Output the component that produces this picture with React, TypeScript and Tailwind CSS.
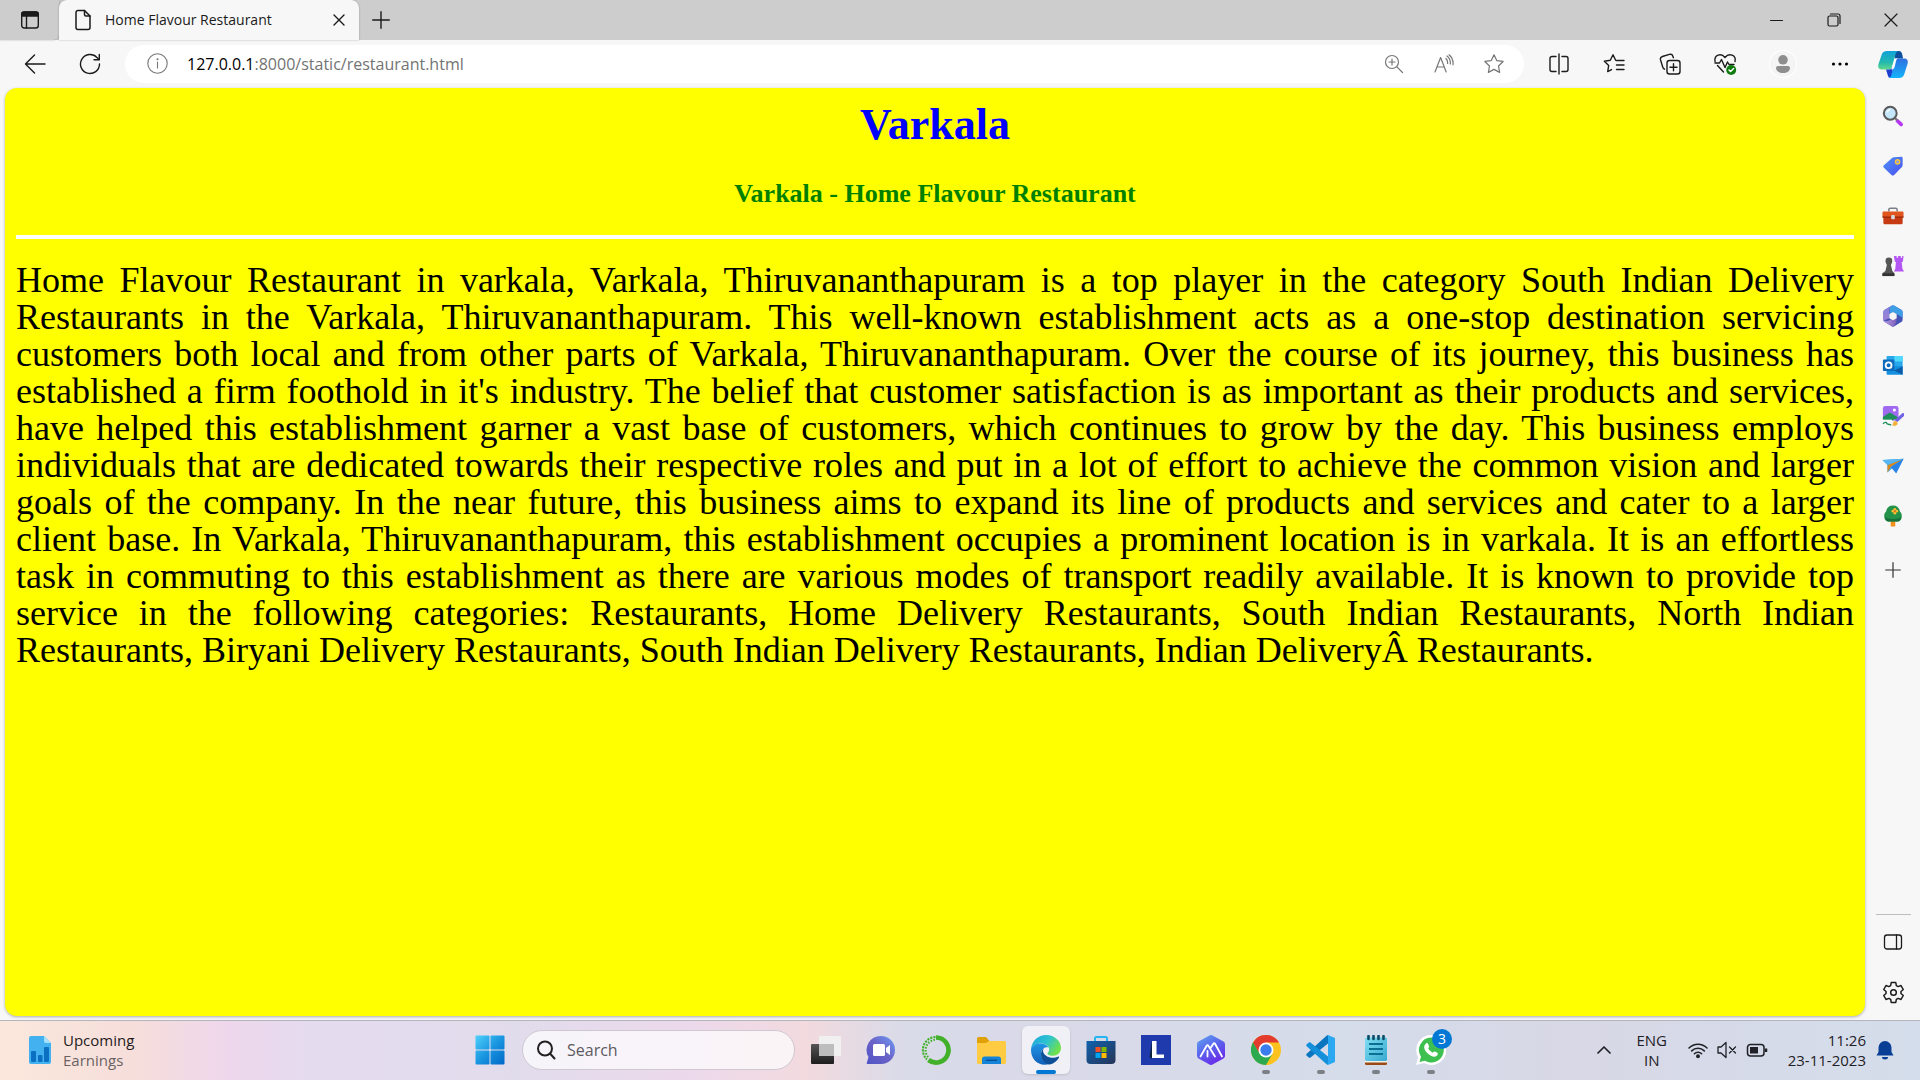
import type { ReactNode } from "react";

const LINES = [
  "Home Flavour Restaurant in varkala, Varkala, Thiruvananthapuram is a top player in the category South Indian Delivery",
  "Restaurants in the Varkala, Thiruvananthapuram. This well-known establishment acts as a one-stop destination servicing",
  "customers both local and from other parts of Varkala, Thiruvananthapuram. Over the course of its journey, this business has",
  "established a firm foothold in it's industry. The belief that customer satisfaction is as important as their products and services,",
  "have helped this establishment garner a vast base of customers, which continues to grow by the day. This business employs",
  "individuals that are dedicated towards their respective roles and put in a lot of effort to achieve the common vision and larger",
  "goals of the company. In the near future, this business aims to expand its line of products and services and cater to a larger",
  "client base. In Varkala, Thiruvananthapuram, this establishment occupies a prominent location is in varkala. It is an effortless",
  "task in commuting to this establishment as there are various modes of transport readily available. It is known to provide top",
  "service in the following categories: Restaurants, Home Delivery Restaurants, South Indian Restaurants, North Indian",
];
const LAST_LINE =
  "Restaurants, Biryani Delivery Restaurants, South Indian Delivery Restaurants, Indian DeliveryÂ Restaurants.";

type IconProps = { size?: number; box?: number; className?: string; sw?: number; children: ReactNode };

/* Outline icon on a square grid */
function Line({ size = 20, box = 20, className = "", sw = 1.2, children }: IconProps) {
  return (
    <svg width={size} height={size} viewBox={`0 0 ${box} ${box}`} fill="none" stroke="currentColor" strokeWidth={sw} strokeLinecap="round" strokeLinejoin="round" className={`shrink-0 ${className}`} aria-hidden="true">
      {children}
    </svg>
  );
}

/* Colour icon */
function Art({ size = 24, box = 24, children }: IconProps) {
  return (
    <svg width={size} height={size} viewBox={`0 0 ${box} ${box}`} className="shrink-0" aria-hidden="true">
      {children}
    </svg>
  );
}

function Btn({ label, className, children }: { label: string; className: string; children: ReactNode }) {
  return (
    <button type="button" aria-label={label} className={`flex shrink-0 items-center justify-center ${className}`}>
      {children}
    </button>
  );
}

const STAR = "M10 1.6l2.5 5.3 5.8.8-4.2 4.1 1 5.8L10 14.9l-5.1 2.7 1-5.8L1.7 7.7l5.800-.8z";

function TitleBar() {
  return (
    <div className="flex h-10 shrink-0 bg-[#cdcdcd]">
      <Btn label="Tab actions" className="w-[59px] rounded-br-md shadow-[0_0_2px_rgba(0,0,0,0.3)]">
        <Line size={20} sw={1.4}>
          <rect x="1.7" y="2" width="16.6" height="16" rx="2.5" />
          <path d="M1.7 6V4.5A2.500 2.500 0 0 1 4.200 2h11.600a2.500 2.500 0 0 1 2.500 2.500V6z" fill="currentColor" />
          <path d="M6.500 6v12" />
        </Line>
      </Btn>
      <div className="flex w-[300px] items-center rounded-t-lg bg-[#f7f7f7] pl-[13px] pr-2 shadow-[0_0_2px_rgba(0,0,0,0.3)]">
        <Line size={22} box={22} sw={1.5}>
          <path d="M12.500 1.500H6A2 2 0 0 0 4 3.500v15a2 2 0 0 0 2 2h10a2 2 0 0 0 2-2V7z" />
          <path d="M12.500 1.500V5.500A1.500 1.500 0 0 0 14 7h4" />
        </Line>
        <span className="ml-[11px] flex-1 whitespace-nowrap text-sm text-[#1b1b1b]">Home Flavour Restaurant</span>
        <Btn label="Close tab" className="h-6 w-6">
          <Line size={12} box={12} sw={1.4}><path d="M1 1l10 10M11 1L1 11" /></Line>
        </Btn>
      </div>
      <Btn label="New tab" className="w-[43px]">
        <Line size={18} box={18} sw={1.4}><path d="M9 .7v16.600M.7 9h16.600" /></Line>
      </Btn>
      <div className="flex-1" />
      <Btn label="Minimize" className="w-[58px]">
        <Line size={13} box={13} sw={1}><path d="M.5 6.500h12" /></Line>
      </Btn>
      <Btn label="Restore" className="w-[57px]">
        <Line size={14} box={14} sw={1.2}>
          <rect x="1" y="3" width="10" height="10" rx="1.5" />
          <path d="M3.500 1H11a2 2 0 0 1 2 2v7.500" />
        </Line>
      </Btn>
      <Btn label="Close window" className="w-[58px]">
        <Line size={14} box={14} sw={1.2}><path d="M1 1l12 12M13 1L1 13" /></Line>
      </Btn>
    </div>
  );
}

function Toolbar() {
  return (
    <div className="flex h-12 shrink-0 items-center pb-px">
      <Btn label="Back" className="ml-[7px] h-10 w-14">
        <Line size={22} box={22} sw={1.4}><path d="M21 11H1.500M10.500 2L1.500 11l9 9" /></Line>
      </Btn>
      <Btn label="Refresh" className="h-10 w-[54px]">
        <Line size={22} box={22} sw={1.4}>
          <path d="M20.500 11A9.500 9.500 0 1 1 18 4.600L20 6.600" />
          <path d="M20.300 1.500v5.300h-5.300" />
        </Line>
      </Btn>
      <div className="ml-2 flex h-[38px] flex-1 items-center rounded-full bg-white pl-[22px] pr-[5px]">
        <Line size={21} box={21} sw={1.1} className="text-[#767676]">
          <circle cx="10.5" cy="10.5" r="9.7" />
          <path d="M10.500 9v6" />
          <circle cx="10.5" cy="6.3" r=".5" fill="currentColor" />
        </Line>
        <div className="relative ml-[19px] h-full flex-1 text-base">
          <input aria-label="Address" defaultValue="127.0.0.1:8000/static/restaurant.html" className="h-full w-full bg-transparent text-transparent outline-none" />
          <div aria-hidden="true" className="pointer-events-none absolute inset-0 flex items-center whitespace-pre text-[#737373]">
            <span className="text-black">127.0.0.1</span>:8000/static/restaurant.html
          </div>
        </div>
        <div className="flex text-[#767676]">
          <Btn label="Zoom" className="h-9 w-[50px]">
            <Line size={20} sw={1.2}>
              <circle cx="8" cy="8" r="6.5" />
              <path d="M12.700 12.700L18.500 18.500M8 5v6M5 8h6" />
            </Line>
          </Btn>
          <Btn label="Read aloud" className="h-9 w-[50px]">
            <Line size={20} sw={1.2}>
              <path d="M1 18L6.600 3.500 12.200 18M3 13h7.200" />
              <path d="M12 4.500c1.400 1.400 1.800 3 1.600 5M13 2c2.600 2 3.600 4.700 3.300 8M15 .8c3.200 2.500 4.400 6 4 10" />
            </Line>
          </Btn>
          <Btn label="Add to favourites" className="h-9 w-[50px]">
            <Line size={22} sw={1.1}><path d={STAR} /></Line>
          </Btn>
        </div>
      </div>
      <div className="ml-[7px] flex">
        <Btn label="Split screen" className="h-10 w-[55px]">
          <Line size={22} box={22} sw={1.4}>
            <path d="M8 3.500H4a2 2 0 0 0-2 2v11a2 2 0 0 0 2 2h4M14 3.500h4a2 2 0 0 1 2 2v11a2 2 0 0 1-2 2h-4M11 1v20" />
          </Line>
        </Btn>
        <Btn label="Favourites" className="h-10 w-14">
          <Line size={22} box={22} sw={1.4}>
            <path d="M14 7.500L12.700 7.300 10 1.800 7.300 7.300l-6 .9 4.400 4.200-1 6.200 3.800-2M15 7.500h6M13.500 12H21M13.500 16.500H21" />
          </Line>
        </Btn>
        <Btn label="Collections" className="h-10 w-[55px]">
          <Line size={22} box={22} sw={1.4}>
            <rect x="8" y="7.5" width="13" height="13.5" rx="2.5" />
            <path d="M14.500 10.700v7M11 14.200h7" />
            <path d="M5.500 16.200C4 15.500 3.800 14.500 3.400 13L1.500 6.800C1 5 1.800 4 3.400 3.500l7-2.100c1.700-.5 3 .2 3.500 1.800l.5 1.500" />
          </Line>
        </Btn>
        <Btn label="Browser essentials" className="h-10 w-[55px]">
          <Line size={24} box={24} sw={1.4}>
            <path d="M2 9.500C1 3 8 .5 12 5.500 16 .5 23.500 3 22 9.500M4.500 13.500L10.500 20M2 11h4.500l2-3.500 3.500 8 2.500-5.500 1.500 2.500H21" />
            <circle cx="18.2" cy="18" r="5" fill="#107c10" stroke="none" />
            <path d="M16 18l1.600 1.600 3-3.200" stroke="#fff" />
          </Line>
        </Btn>
        <Btn label="Profile" className="h-10 w-[61px]">
          <Art size={28} box={28}>
            <circle cx="14" cy="14" r="14" fill="#fff" />
            <circle cx="14" cy="14" r="13" fill="#f4f4f4" />
            <circle cx="14" cy="9.8" r="4.8" fill="#8e8e8e" />
            <path d="M7 18a2 2 0 0 1 2-2h10a2 2 0 0 1 2 2c0 3-3 5-7 5s-7-2-7-5z" fill="#8e8e8e" />
          </Art>
        </Btn>
        <Btn label="Settings and more" className="h-10 w-[53px]">
          <Art size={18} box={18}>
            <circle cx="2.5" cy="9" r="1.6" /><circle cx="9" cy="9" r="1.6" /><circle cx="15.5" cy="9" r="1.6" />
          </Art>
        </Btn>
        <Btn label="Copilot" className="h-10 w-[54px]">
          <Art size={30} box={30}>
            <defs>
              <linearGradient id="cpA" x1="0" y1="0" x2="0" y2="1"><stop offset="0" stopColor="#0fa2d8" /><stop offset=".6" stopColor="#22b8b0" /><stop offset="1" stopColor="#5fd98a" /></linearGradient>
              <linearGradient id="cpB" x1="0" y1="0" x2="0" y2="1"><stop offset="0" stopColor="#2f6fe0" /><stop offset="1" stopColor="#12b4fb" /></linearGradient>
            </defs>
            <path d="M15 2h6c2 0 2.700 1.500 3.400 4L25 9.500h-8z" fill="#0d4f9c" />
            <path d="M9 2h12c-2 0-3 1.500-3.500 3.500L14 17.500c-.6 2-1.500 3-3.500 3H3.500C.5 20.500-.3 18 .5 15L3.700 5.500C4.500 3.200 6 2 9 2z" fill="url(#cpA)" />
            <path d="M8 20.500h3c2 0 2.500-1 3.300-3l1.200 11.500H13c-2.200 0-3-1.500-3.600-4z" fill="#1d3fcf" />
            <path d="M21 29H10c2 0 3-1.500 3.500-3.500L17 12.500c.6-2 1.500-3 3.500-3h6c3 0 3.800 2.500 3 5.500l-3.200 10C25.500 27.800 24 29 21 29z" fill="url(#cpB)" />
            <path d="M14.500 17L16 12c.6-2 1.700-2.700 3.500-2.700-1.500 1.500-1.700 4-2.500 7.200-.5 2.500-1.500 4-4 4 .8-.8 1.200-2 1.500-3.500z" fill="#fff" />
          </Art>
        </Btn>
      </div>
    </div>
  );
}

const SIDE: { label: string; art: ReactNode }[] = [
  {
    label: "Search",
    art: (
      <>
        <path d="M17 17.500L20.800 21.200" stroke="#b637f2" strokeWidth="4" strokeLinecap="round" />
        <path d="M13.500 13.500l3 3" stroke="#777" strokeWidth="2.5" />
        <circle cx="9" cy="9" r="7" fill="#c4e6fb" stroke="#5a5a5a" strokeWidth="2.2" />
        <path d="M5.500 8A4 4 0 0 1 9 5" stroke="#fff" strokeWidth="1.5" fill="none" />
      </>
    ),
  },
  {
    label: "Shopping",
    art: (
      <>
        <defs><linearGradient id="tag" x1="0" y1="0" x2="1" y2="1"><stop offset="0" stopColor="#4c94f5" /><stop offset="1" stopColor="#4b4ff0" /></linearGradient></defs>
        <path d="M13 2.500l8-.5c1 0 1.500.6 1.500 1.500V11c0 .8-.3 1.500-.8 2l-8.500 8.700a2 2 0 0 1-2.800 0L2 14a2 2 0 0 1 0-2.800l9-8c.5-.5 1.200-.7 2-.7z" fill="url(#tag)" />
        <circle cx="17" cy="7.5" r="2.3" fill="#8f9be8" stroke="#fbc62d" strokeWidth="1.5" />
      </>
    ),
  },
  {
    label: "Tools",
    art: (
      <>
        <path d="M7.500 7V5a1.500 1.500 0 0 1 1.500-1.500h6A1.500 1.500 0 0 1 16.500 5v2" fill="none" stroke="#7b8087" strokeWidth="1.7" />
        <rect x="1.5" y="10" width="21" height="11" rx="1.5" fill="#c63a14" />
        <path d="M.5 8.500C.5 7.500 1 7 2 7h20c1 0 1.500.5 1.500 1.500V13H.5z" fill="#e0561e" />
        <path d="M.5 12.500h23v1.500H.5z" fill="#9c2a0e" />
        <rect x="10" y="11" width="4" height="4.5" rx="1" fill="#d5dade" />
      </>
    ),
  },
  {
    label: "Games",
    art: (
      <>
        <path d="M13 1h3v2h1.500V1h3v2H22V1h1.500l-.7 6-1.300 1 .8 7 1.700 3H13l1.500-3 .7-7-1.200-1z" fill="#b456f3" />
        <circle cx="7.5" cy="6.5" r="3.7" fill="#555" />
        <path d="M4.500 9h6l-.8 2 1.600 6.500 2.200 2.500v3H.5v-3L3.700 17.500 5.300 11z" fill="#555" />
        <path d="M.5 20h13v3H.5z" fill="#333" />
      </>
    ),
  },
  {
    label: "Microsoft 365",
    art: (
      <>
        <defs>
          <linearGradient id="mL" x1="0" y1="0" x2="0" y2="1"><stop offset="0" stopColor="#7f86dc" /><stop offset="1" stopColor="#a07fd6" /></linearGradient>
          <linearGradient id="mB" x1="0" y1="0" x2="1" y2="0"><stop offset="0" stopColor="#b9a0e4" /><stop offset="1" stopColor="#7d5cba" /></linearGradient>
        </defs>
        <path d="M10.500.8a3 3 0 0 1 3 0l7.500 4.500A3 3 0 0 1 22.500 8v8a3 3 0 0 1-1.500 2.600l-7.500 4.600a3 3 0 0 1-3 0L3 18.600A3 3 0 0 1 1.500 16V8A3 3 0 0 1 3 5.300z" fill="#4453b4" />
        <path d="M10.500.8a3 3 0 0 1 3 0l7.500 4.500A3 3 0 0 1 22.500 8v6L16.500 10 12 7.500 8.500 9.500V5c0-2 .8-3.500 2-4.200z" fill="#3f9fe6" />
        <path d="M10.500.8C8.800 2 8 3.500 8 5.500v9L1.500 17V8A3 3 0 0 1 3 5.300z" fill="url(#mL)" />
        <path d="M1.500 16.500C3.500 18 5.500 18 7.500 17L16 12.500V15c0 2.500-.5 4.500-3 8.300a3 3 0 0 1-2.500-.1L3 18.600c-1-.6-1.500-1.200-1.500-2.100z" fill="url(#mB)" />
        <path d="M12 7.500l4 2.300v4.600L12 16.700l-4-2.300V9.800z" fill="#f7f7f7" />
      </>
    ),
  },
  {
    label: "Outlook",
    art: (
      <>
        <rect x="5" y="1" width="17.5" height="12" rx="1" fill="#28a8ea" />
        <path d="M13.500 1H21.500a1 1 0 0 1 1 1v5h-9z" fill="#50d9ff" />
        <path d="M5 12h17.500v9.500H6a1 1 0 0 1-1-1z" fill="#1490df" />
        <path d="M22.500 12.500v9L13 17z" fill="#0a5ba8" />
        <rect x="1" y="5" width="12.5" height="12.5" rx="1" fill="#0f6cbd" />
        <circle cx="7.2" cy="11.2" r="3.2" fill="none" stroke="#fff" strokeWidth="2" />
      </>
    ),
  },
  {
    label: "Image creator",
    art: (
      <>
        <rect x="1" y="1" width="17" height="16" rx="2.5" fill="#a06af0" />
        <path d="M1 13l6-4c1-.6 2-.6 3 0l8 5v1.500h-5l-3 2.500H3.500A2.500 2.500 0 0 1 1 15z" fill="#1f8f5a" />
        <path d="M1 16h10v5H1z" fill="#f7f7f7" />
        <circle cx="13.5" cy="5.5" r="1.7" fill="#fff" />
        <path d="M23 10.500l-6.500 6" stroke="#7262e8" strokeWidth="3.6" strokeLinecap="round" />
        <path d="M11 22.500c1.200-1 .5-2.500 1.500-4 1-1.400 3-1.400 4 0s.5 3.500-1.500 4c-1.300.4-3 .3-4 0z" fill="#f0b23a" />
        <path d="M1 20.500c2-2 4-2 4-.5s3 .5 5 2" stroke="#1f8f5a" strokeWidth="1.5" fill="none" />
      </>
    ),
  },
  {
    label: "Drop",
    art: (
      <>
        <path d="M.5 5.500L23.500 4 15.500 20 11 14.500 6 19V11z" fill="#36a3ec" />
        <path d="M23.500 4L6 11v8l3.500-6z" fill="#d8891f" />
        <path d="M.5 5.500L23.500 4 6 11z" fill="#58b6f2" />
        <path d="M23.500 4L9.500 13l6 7z" fill="#2a83e8" />
      </>
    ),
  },
  {
    label: "Tree",
    art: (
      <>
        <rect x="9.5" y="17" width="5" height="6.5" rx="1" fill="#f0911f" />
        <path d="M12 .5c4.500 0 7 3 7.500 6.500 2 1.500 2.300 4 2 6-.3 3-2 5-4.500 5H7c-2.500 0-4.200-2-4.500-5-.3-2 0-4.500 2-6C5 3.500 7.500.5 12 .5z" fill="#23924a" />
        <path d="M3 13c1 4 3 5 5 5h8c2.500 0 4.500-1 5-5-3 3-14 3-18 0z" fill="#17703a" />
        <g fill="#ffc02e"><circle cx="14" cy="4.7" r="1.5" /><circle cx="14" cy="8.900" r="1.5" /><circle cx="11.9" cy="6.8" r="1.5" /><circle cx="16.1" cy="6.8" r="1.5" /></g>
        <circle cx="14" cy="6.8" r="1.2" fill="#e5652a" />
      </>
    ),
  },
];

function gear() {
  const pts: string[] = [];
  for (let i = 0; i < 6; i++) {
    for (const [off, r] of [[-22, 7.2], [-13, 9.8], [13, 9.8], [22, 7.2]]) {
      const a = ((i * 60 + off - 90) * Math.PI) / 180;
      pts.push(`${(11 + r * Math.cos(a)).toFixed(2)} ${(11 + r * Math.sin(a)).toFixed(2)}`);
    }
  }
  return `M${pts.join("L")}Z`;
}

function Sidebar() {
  return (
    <aside className="flex w-[54px] shrink-0 flex-col items-center pt-[3px]">
      {SIDE.map((s) => (
        <Btn key={s.label} label={s.label} className="h-[50px] w-full"><Art size={22}>{s.art}</Art></Btn>
      ))}
      <Btn label="Customise" className="mt-1 h-[50px] w-full text-[#333]">
        <Line size={16} box={16} sw={1.2}><path d="M8 .7v14.600M.7 8h14.600" /></Line>
      </Btn>
      <div className="flex-1" />
      <hr className="h-px w-[35px] border-0 bg-[#bdbdbd]" />
      <Btn label="Hide sidebar" className="mt-0.5 h-[50px] w-full">
        <Line size={20} sw={1.3}><rect x="1.5" y="3" width="17" height="14" rx="2.5" /><path d="M13.500 3v14" /></Line>
      </Btn>
      <Btn label="Settings" className="mb-[3px] h-[50px] w-full">
        <Line size={23} box={22} sw={1.4}><path d={gear()} /><circle cx="11" cy="11" r="2.7" /></Line>
      </Btn>
    </aside>
  );
}

type TaskProps = { label: string; children: ReactNode; mark?: "none" | "run" | "active"; badge?: string };

function TaskApp({ label, children, mark = "none", badge }: TaskProps) {
  return (
    <button type="button" aria-label={label} className="relative flex h-12 w-[55px] shrink-0 items-center justify-center">
      <span className={mark === "active" ? "flex h-12 w-12 items-center justify-center rounded-md bg-white/60 shadow-sm" : "flex"}>
        <Art size={30} box={30}>{children}</Art>
      </span>
      {mark === "run" && <span className="absolute bottom-0 h-1 w-2 rounded-full bg-[#7d7f86]" />}
      {mark === "active" && <span className="absolute bottom-0 h-1 w-5 rounded-full bg-[#0078d4]" />}
      {badge && <span className="absolute right-1.5 top-[3px] flex size-5 items-center justify-center rounded-full bg-[#0078d4] text-sm text-white">{badge}</span>}
    </button>
  );
}

function Taskbar() {
  return (
    <footer className="grid h-[60px] shrink-0 grid-cols-[1fr_auto_1fr] items-center border-t border-[#b4b4be] bg-[linear-gradient(90deg,#fbe8dc_0%,#f6dedb_7%,#eed7ec_12%,#e5dbef_16%,#e1dcec_27%,#ecd9eb_36%,#f2dade_42%,#d9dbe9_47%,#d9d9e8_55%,#d5dcea_70%,#d8d8e6_82%,#d4ddeb_100%)] pb-0.5">
      <button type="button" className="flex items-center pl-[25px] text-left">
        <Art size={30} box={30}>
          <path d="M6 1h13l7 7v19a2 2 0 0 1-2 2H6a2 2 0 0 1-2-2V3a2 2 0 0 1 2-2z" fill="#43b1f0" />
          <path d="M19 1l7 7h-5a2 2 0 0 1-2-2z" fill="#a6e2fb" />
          <rect x="6" y="16" width="5" height="11" rx="1" fill="#0b6fc2" /><rect x="13" y="20" width="4.5" height="7" rx="1" fill="#0b6fc2" /><rect x="19" y="12" width="5" height="15" rx="1" fill="#0b6fc2" />
        </Art>
        <span className="ml-2 flex flex-col text-[15px] leading-5">
          <span className="text-[#1f1b1b]">Upcoming</span>
          <span className="text-[#6a6262]">Earnings</span>
        </span>
      </button>
      <nav className="flex items-center">
        <TaskApp label="Start">
          <defs><linearGradient id="win" x1="0" y1="0" x2="30" y2="30" gradientUnits="userSpaceOnUse"><stop offset="0" stopColor="#4fd3fc" /><stop offset=".5" stopColor="#1a95e0" /><stop offset="1" stopColor="#0067c6" /></linearGradient></defs>
          <g fill="url(#win)"><rect x=".5" y=".5" width="14" height="14" rx="1" /><rect x="15.5" y=".5" width="14" height="14" rx="1" /><rect x=".5" y="15.5" width="14" height="14" rx="1" /><rect x="15.5" y="15.5" width="14" height="14" rx="1" /></g>
        </TaskApp>
        <label className="ml-[5px] mr-[3px] flex h-10 w-[273px] items-center rounded-full border border-[#cfc8d3] bg-white/70 pl-[13px]">
          <Line size={20} sw={2} className="text-[#222]"><circle cx="9" cy="8.5" r="7" /><path d="M14 13.500l4.500 5" /></Line>
          <input aria-label="Search" placeholder="Search" className="ml-[11px] w-40 bg-transparent text-base outline-none placeholder:text-[#5d5a60]" />
        </label>
        <TaskApp label="Task view">
          <defs><linearGradient id="tv" x1="0" y1="0" x2="0" y2="1"><stop offset="0" stopColor="#555" /><stop offset="1" stopColor="#1d1d1d" /></linearGradient></defs>
          <rect x="0" y="9" width="23" height="20" rx="1" fill="url(#tv)" /><rect x="8" y="1" width="22" height="20" rx="1" fill="#f0f0f0" /><path d="M8 9h15v12H8z" fill="#bdbdbd" />
        </TaskApp>
        <TaskApp label="Chat">
          <defs><linearGradient id="ch" x1="1" y1="0" x2="0" y2="1"><stop offset="0" stopColor="#6f9cf6" /><stop offset=".5" stopColor="#6a62c6" /><stop offset="1" stopColor="#5154c6" /></linearGradient></defs>
          <path d="M15 1a14 14 0 1 1 0 28H1.500c-.8 0-1-.6-.7-1.200L2.500 22A14 14 0 0 1 15 1z" fill="url(#ch)" />
          <rect x="7" y="9" width="12" height="12" rx="1.5" fill="#fff" /><path d="M20 13l4-3v10l-4-3z" fill="#fff" />
        </TaskApp>
        <TaskApp label="Anaconda">
          <path d="M15 2.500A12.500 12.500 0 1 1 7.500 25" fill="none" stroke="#43b02a" strokeWidth="4.7" />
          <path d="M14.500 2A13 13 0 0 0 6 24.500" fill="none" stroke="#43b02a" strokeWidth="2" strokeDasharray="2.2 1" />
          <path d="M14 4.800A10.500 10.500 0 0 0 7.500 22.500" fill="none" stroke="#43b02a" strokeWidth="2" strokeDasharray="1.6 1.4" />
        </TaskApp>
        <TaskApp label="File Explorer">
          <path d="M1 3.500A1.500 1.500 0 0 1 2.500 2H10l3.500 4H29v6H1z" fill="#e0a106" />
          <path d="M1 8h9l3-2h15.500A1.500 1.500 0 0 1 30 7.500v20a1.500 1.500 0 0 1-1.500 1.500h-26A1.500 1.500 0 0 1 1 27.500z" fill="#ffcb42" />
          <path d="M6 29v-5a2.500 2.500 0 0 1 2.500-2.500h14A2.500 2.500 0 0 1 25 24v5z" fill="#1584d8" /><path d="M10 25.300h11" stroke="#0a4c93" strokeWidth="1.3" />
        </TaskApp>
        <TaskApp label="Microsoft Edge" mark="active">
          <defs>
            <linearGradient id="eT" x1="0" y1="0" x2="1" y2=".5"><stop offset="0" stopColor="#1fa3e0" /><stop offset=".55" stopColor="#2cc3cf" /><stop offset="1" stopColor="#6fe04f" /></linearGradient>
            <linearGradient id="eL" x1="0" y1="0" x2="0" y2="1"><stop offset="0" stopColor="#2196e6" /><stop offset="1" stopColor="#1160b8" /></linearGradient>
          </defs>
          <path d="M0 14C1 5.500 7.500 0 15 0c8.500 0 15 6 15 13 0 4.500-3.500 7.700-8 7.700-4 0-5.500-1.200-5.500-2.200 0-.8 1.700-1.400 1.700-4.200C18 11 14.500 8.500 10 8.500 5 8.500 1.500 11 0 14z" fill="url(#eT)" />
          <path d="M0 14c1.500-3.500 5-5.500 9.500-5.500 4 0 7 2 8 4-4-1.500-7.500 2-7.500 6 0 6 5 9.500 8.500 10.500C8 32 0 25 0 15z" fill="url(#eL)" />
          <path d="M13 13c-1.600 1-3 3.500-3 6 0 6 4 10 9 10.500 4-1 7.500-4 9-7 .3-.7-.3-1.200-1-.8-6 3-15-.5-15-6 0-1 .4-2 1-2.700z" fill="#0e4f97" />
        </TaskApp>
        <TaskApp label="Microsoft Store">
          <defs><linearGradient id="st" x1="0" y1="0" x2="1" y2="1"><stop offset="0" stopColor="#0f62ad" /><stop offset="1" stopColor="#263457" /></linearGradient></defs>
          <path d="M9 6V3.500A1.500 1.500 0 0 1 10.500 2h9A1.500 1.500 0 0 1 21 3.500V6" fill="none" stroke="#25b5f0" strokeWidth="2" />
          <path d="M.5 6h29v19a4 4 0 0 1-4 4h-21a4 4 0 0 1-4-4z" fill="url(#st)" />
          <path d="M9.500 12h5v5h-5z" fill="#f25022" /><path d="M15.500 12h5v5h-5z" fill="#7fba00" /><path d="M9.500 18h5v5h-5z" fill="#00a4ef" /><path d="M15.500 18h5v5h-5z" fill="#ffb900" />
        </TaskApp>
        <TaskApp label="L">
          <path d="M0 0h30v30H0z" fill="#1e3aad" /><path d="M11 6L8.500 22l2.500 2z" fill="#0c2340" />
          <path d="M11 6h4.500v13.500H23V23H11z" fill="#fff" />
        </TaskApp>
        <TaskApp label="Analytics">
          <defs><linearGradient id="hx" x1="0" y1="0" x2=".6" y2="1"><stop offset="0" stopColor="#5fa8ee" /><stop offset=".5" stopColor="#5a66ee" /><stop offset="1" stopColor="#6a2ce8" /></linearGradient></defs>
          <path d="M13.500.4a3 3 0 0 1 3 0l11 6.200A3 3 0 0 1 29 9.200v11.600a3 3 0 0 1-1.500 2.600l-11 6.200a3 3 0 0 1-3 0l-11-6.200A3 3 0 0 1 1 20.800V9.200a3 3 0 0 1 1.500-2.600z" fill="url(#hx)" />
          <path d="M4.500 21.500L10.500 11q1-1.500 2 0l6.500 10.500M14.500 13l2.700-4q1-1.500 2 0l6.800 12.500M11.500 16v5.500" fill="none" stroke="#fff" strokeWidth="1.8" strokeLinecap="round" strokeLinejoin="round" />
        </TaskApp>
        <TaskApp label="Google Chrome" mark="run">
          <circle cx="15" cy="15" r="15" fill="#fcc31e" />
          <path d="M15 15L2 7.500A15 15 0 0 1 28 7.500H15z" fill="#e33b2e" />
          <path d="M2 7.500A15 15 0 0 0 15 30l6.500-11.300L15 15 8.500 18.700z" fill="#2da94f" />
          <path d="M2 7.500l6.500 11.200L15 7.500z" fill="#e33b2e" /><path d="M2 7.500l6.500 11.200-4.500 3A15 15 0 0 1 2 7.500z" fill="#2da94f" />
          <circle cx="15" cy="15" r="7.5" fill="#fff" /><circle cx="15" cy="15" r="5.7" fill="#3b7ded" />
        </TaskApp>
        <TaskApp label="Visual Studio Code" mark="run">
          <path d="M22 0l7 3v24l-7 3z" fill="#2aa8f2" />
          <path d="M22 0v8.500L4.500 22.500c-.6.500-1.200.4-1.700 0L.7 20.700c-.6-.6-.6-1.300 0-1.900L20.500.7z" fill="#0b76bf" />
          <path d="M22 30v-8.500L4.500 7.500c-.6-.5-1.200-.4-1.700 0L.7 9.300c-.6.600-.6 1.300 0 1.900L20.500 29.300z" fill="#1490db" />
        </TaskApp>
        <TaskApp label="Notepad" mark="run">
          <defs><linearGradient id="np" x1="0" y1="0" x2="1" y2="1"><stop offset="0" stopColor="#7fe0f2" /><stop offset="1" stopColor="#38a9d0" /></linearGradient></defs>
          <path d="M4 25h22v3.500a1.500 1.500 0 0 1-1.500 1.500h-19A1.500 1.500 0 0 1 4 28.500z" fill="#9a4a12" /><path d="M4 24h22v3.500H4z" fill="#f4f1ea" />
          <rect x="4" y="2.5" width="22" height="23.5" rx="1.5" fill="url(#np)" />
          <path d="M7.500 1v3M12.500 1v3M17.500 1v3M22.500 1v3" stroke="#0c4a66" strokeWidth="2.6" strokeLinecap="round" />
          <path d="M8 9h14M8 14h14M8 19h14" stroke="#0b6e93" strokeWidth="2" />
        </TaskApp>
        <TaskApp label="WhatsApp" mark="run" badge="3">
          <path d="M15 0a15 15 0 1 1-7 28L0 30l2.200-7.500A15 15 0 0 1 15 0z" fill="#fff" />
          <path d="M15 2.500a12.500 12.500 0 1 1-6 23.300L3.500 27 5 21.800A12.500 12.500 0 0 1 15 2.500z" fill="#3dc04f" />
          <path d="M10 8.500c.8-.7 1.700-.5 2 .2l1.100 2.500c.2.600 0 1-.9 2.100 1 2 2.500 3.400 4.600 4.400.9-1.100 1.400-1.500 2-1.200l2.600 1.200c.6.300.5 2-.6 3-1.500 1.300-3.500 1.200-5.800.1-3-1.500-5-3.600-6.300-6.300-1-2.500-.5-4.600 1.300-6z" fill="#fff" />
        </TaskApp>
      </nav>
      <div className="flex items-center justify-end pr-[26px] text-[15px] leading-5 text-[#1f2126]">
        <Btn label="Show hidden icons" className="h-10 w-10">
          <Line size={14} box={14} sw={1.7}><path d="M1 10l6-6 6 6" /></Line>
        </Btn>
        <button type="button" className="w-14 text-center">ENG<br />IN</button>
        <button type="button" aria-label="Network, volume and battery" className="ml-2 flex items-center gap-[9px]">
          <Line size={20} sw={1.5}>
            <path d="M1 8c5-5 13-5 18 0M3.700 10.900c3.500-3.500 9.100-3.500 12.600 0M6.400 13.700c2-2 5.200-2 7.200 0" />
            <circle cx="10" cy="16.3" r="1.2" fill="currentColor" />
          </Line>
          <Line size={20} sw={1.3}><path d="M1 7h3l5-4.500v15L4 13H1zM12.500 7l6 6M18.500 7l-6 6" /></Line>
          <svg width="22" height="20" viewBox="0 0 22 20" fill="none" stroke="currentColor" strokeWidth="1.5" aria-hidden="true">
            <rect x="1.5" y="4.5" width="16.5" height="11.5" rx="3" /><rect x="4" y="7" width="8" height="6.5" fill="currentColor" stroke="none" /><path d="M20 8.500v3.500" strokeWidth="2.5" />
          </svg>
        </button>
        <button type="button" className="ml-5 whitespace-nowrap text-right">11:26<br />23-11-2023</button>
        <Btn label="Notifications" className="ml-2.5 h-10 w-[18px]">
          <svg width="18" height="20" viewBox="0 0 18 20" fill="#0a3f96" aria-hidden="true"><path d="M9 1a6.500 6.500 0 0 1 6.500 6.500V12l2 3.500H.5l2-3.500V7.500A6.500 6.500 0 0 1 9 1zM6 17h6a3 2.500 0 0 1-6 0z" /></svg>
        </Btn>
      </div>
    </footer>
  );
}

export default function App() {
  return (
    <div className="flex h-screen flex-col overflow-hidden bg-[#f7f7f7] font-['Open_Sans','Noto_Sans',sans-serif] text-[#1b1b1b]">
      <TitleBar />
      <Toolbar />
      <div className="flex min-h-0 flex-1">
        <main className="mb-1 ml-[5px] mr-px min-w-0 flex-1 overflow-hidden rounded-xl bg-[#ffff00] px-[11px] pt-3 font-['Liberation_Serif',serif] text-black shadow-[0_1px_3px_rgba(0,0,0,0.3)]">
          <h1 className="text-center text-[44px] font-bold leading-[50px] text-[#0000ff]">Varkala</h1>
          <h3 className="mt-[29px] text-center text-[26px] font-bold leading-[30px] text-[#008000]">Varkala - Home Flavour Restaurant</h3>
          <hr className="mt-[26px] h-1 border-0 bg-white" />
          <p className="mt-[23px] whitespace-nowrap text-[36px] leading-[37px]">
            {LINES.map((l) => (
              <span key={l} className="block text-justify [text-align-last:justify]">{l} </span>
            ))}
            {LAST_LINE}
          </p>
        </main>
        <Sidebar />
      </div>
      <Taskbar />
    </div>
  );
}
